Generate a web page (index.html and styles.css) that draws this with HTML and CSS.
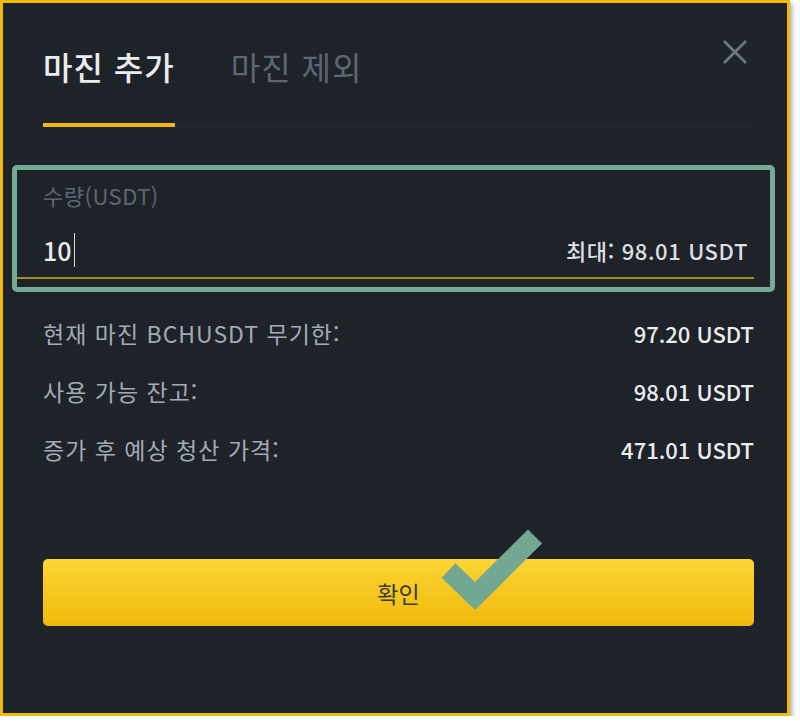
FILE: index.html
```html
<!DOCTYPE html>
<html lang="ko">
<head>
    <meta charset="utf-8">
    <title>마진 추가</title>
    <link rel="stylesheet" href="styles.css">
</head>
<body>
    <div class="frame">
        <!-- Tabs -->
        <div class="tabs">
            <div class="tab active">마진 추가</div>
            <div class="tab">마진 제외</div>
            <button class="close" type="button" aria-label="닫기">
                <svg width="26" height="24" viewBox="0 0 26 24">
                    <path d="M2 1 L24 23 M24 1 L2 23" stroke="#6f7885" stroke-width="2.6" fill="none"/>
                </svg>
            </button>
        </div>

        <!-- Amount -->
        <div class="field">
            <div class="field-label">수량(USDT)</div>
            <div class="field-row">
                <span class="amount">10<span class="caret"></span></span>
                <span class="max">최대: 98.01 USDT</span>
            </div>
        </div>

        <!-- Summary -->
        <div class="summary">
            <div class="row">
                <span class="row-label">현재 마진 BCHUSDT 무기한:</span>
                <span class="row-value">97.20 USDT</span>
            </div>
            <div class="row">
                <span class="row-label">사용 가능 잔고:</span>
                <span class="row-value">98.01 USDT</span>
            </div>
            <div class="row">
                <span class="row-label">증가 후 예상 청산 가격:</span>
                <span class="row-value">471.01 USDT</span>
            </div>
        </div>

        <button class="confirm" type="submit">확인</button>

        <!-- annotation marks -->
        <div class="highlight"></div>
        <svg class="check" width="120" height="100" viewBox="0 0 120 100">
            <polyline points="18.5,50.5 45,76 105,16.5" fill="none" stroke="#72a892" stroke-width="20" stroke-linejoin="miter" stroke-linecap="butt"/>
        </svg>
    </div>
</body>
</html>
```

FILE: styles.css
```css
body {
    margin: 0;
    background-color: #fff;
    font-family: "Noto Sans CJK KR", "Noto Sans", sans-serif;
}

.frame {
    position: relative;
    box-sizing: border-box;
    width: 790px;
    height: 716px;
    padding: 43px 33px 0 40px;
    background-color: #1e2329;
    border: 3px solid #f0b90b;
    box-shadow: 2px 3px 5px rgba(0, 0, 0, 0.35);
}

/* tabs */
.tabs {
    display: flex;
    align-items: flex-start;
    gap: 56px;
    border-bottom: 1px solid #262b32;
    height: 80px;
}

.tab {
    font-size: 32px;
    line-height: 40px;
    font-weight: 400;
    letter-spacing: 1px;
    color: #5e6673;
    padding-bottom: 37px;
}

.tab.active {
    font-weight: 500;
    color: #eaecef;
    border-bottom: 4px solid #f0b90b;
}

.close {
    margin-left: auto;
    margin-top: -6px;
    margin-right: 6px;
    padding: 0;
    background: none;
    border: none;
    display: flex;
}

/* amount field */
.field {
    margin-top: 54px;
    margin-left: -26px;
    padding-left: 26px;
    border-bottom: 2px solid #a88a22;
}

.field-label {
    font-size: 22px;
    line-height: 28px;
    letter-spacing: 0.5px;
    color: #5e6673;
}

.field-row {
    display: flex;
    justify-content: space-between;
    align-items: center;
    height: 32px;
    margin-top: 25px;
    padding-bottom: 11px;
}

.amount {
    display: flex;
    align-items: center;
    font-size: 25px;
    font-weight: 500;
    color: #eaecef;
}

.caret {
    display: inline-block;
    width: 1px;
    height: 34px;
    margin-left: 2px;
    background-color: #d5d8dc;
}

.max {
    font-size: 22px;
    font-weight: 500;
    letter-spacing: 0.6px;
    color: #dcdfe3;
    margin-right: 6px;
}

/* summary rows */
.summary {
    margin-top: 37px;
    display: flex;
    flex-direction: column;
    gap: 24px;
}

.row {
    display: flex;
    justify-content: space-between;
    align-items: center;
    height: 34px;
}

.row-label {
    font-size: 23px;
    letter-spacing: 1px;
    color: #a3aab4;
}

.row-value {
    font-size: 22px;
    font-weight: 500;
    color: #eaecef;
}

/* confirm */
.confirm {
    display: block;
    width: 100%;
    height: 67px;
    margin-top: 93px;
    border: none;
    border-radius: 5px;
    background: linear-gradient(#fcd535, #f0b90b);
    font-family: inherit;
    font-size: 23px;
    color: #3b3a33;
}

.highlight {
    position: absolute;
    left: 9px;
    top: 162px;
    width: 753px;
    height: 117px;
    border: 5px solid #76a997;
    border-radius: 5px;
}

.check {
    position: absolute;
    left: 427px;
    top: 517px;
}
```
